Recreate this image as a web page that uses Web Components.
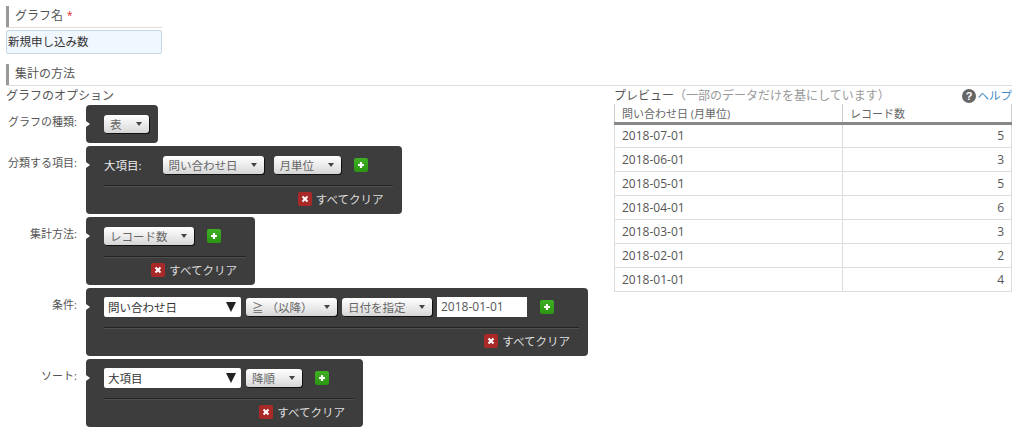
<!DOCTYPE html>
<html lang="ja">
<head>
<meta charset="utf-8">
<style>
html, body { margin: 0; background: #fff; }
body { font: 12px "Open Sans", "Noto Sans CJK JP", sans-serif; color: #444; width: 1024px; height: 436px; overflow: hidden; }
</style>
</head>
<body>
<report-form></report-form>

<script>
class SectionTitle extends HTMLElement {
  constructor() {
    super();
    this.attachShadow({ mode: 'open' }).innerHTML = `
<style>
:host { display: block; border-bottom: 1px solid #ddd; height: 21px; }
div { border-left: 3px solid #999; height: 21px; padding-left: 6px; line-height: var(--title-line, 19px); font-size: 12px; color: #555; box-sizing: border-box; }
::slotted(b) { color: #d22; font-weight: normal; font-size: 10px; margin-left: 4px; vertical-align: 1px; }
</style>
<div><slot></slot></div>`;
  }
}

class DropButton extends HTMLElement {
  constructor() {
    super();
    this.attachShadow({ mode: 'open' }).innerHTML = `
<style>
:host { display: inline-flex; align-items: center; justify-content: space-between; box-sizing: border-box; height: 18px; padding: 0 7px 0 6px; font-size: 11.5px; color: #666; white-space: nowrap;
  background: linear-gradient(#fff, #e4e4e4 70%, #d4d4d4); border-radius: 3px; box-shadow: 1px 1px 0 #111; }
i { width: 0; height: 0; border: 3.5px solid transparent; border-top: 4px solid #444; border-bottom: 0; margin-left: 8px; }
</style>
<slot></slot><i></i>`;
  }
}

class SelectBox extends HTMLElement {
  constructor() {
    super();
    this.attachShadow({ mode: 'open' }).innerHTML = `
<style>
:host { display: inline-flex; align-items: center; justify-content: space-between; box-sizing: border-box; width: 137px; height: 20px; padding: 0 5px 0 4px; background: #fff; border-radius: 2px; font-size: 11.5px; color: #333; }
i { width: 0; height: 0; border: 5px solid transparent; border-top: 10px solid #222; border-bottom: 0; }
</style>
<slot></slot><i></i>`;
  }
}

class AddButton extends HTMLElement {
  constructor() {
    super();
    this.attachShadow({ mode: 'open' }).innerHTML = `
<style>
:host { display: inline-flex; width: 14px; height: 14px; background: linear-gradient(#3fb024, #2c9412); border-radius: 2px; align-items: center; justify-content: center; }
</style>
<svg width="8" height="8" viewBox="0 0 8 8"><path d="M4 1v6M1 4h6" stroke="#fff" stroke-width="2.2" fill="none"/></svg>`;
  }
}

class ClearButton extends HTMLElement {
  constructor() {
    super();
    this.attachShadow({ mode: 'open' }).innerHTML = `
<style>
:host { display: flex; align-items: center; justify-content: flex-end; height: 14px; font-size: 11.5px; color: #ddd; }
span { display: inline-flex; width: 14px; height: 14px; margin-right: 4px; background: #a92828; border-radius: 2px; align-items: center; justify-content: center; }
</style>
<span><svg width="8" height="8" viewBox="0 0 8 8"><path d="M1.5 1.5l5 5M6.5 1.5l-5 5" stroke="#fff" stroke-width="2" fill="none"/></svg></span>すべてクリア`;
  }
}

class OptionRow extends HTMLElement {
  constructor() {
    super();
    this.attachShadow({ mode: 'open' }).innerHTML = `
<style>
:host { display: flex; align-items: flex-start; margin-bottom: 3px; }
.label { width: 71px; margin-right: 9px; text-align: right; font-size: 11px; color: #555; padding-top: 10px; line-height: 14px; white-space: nowrap; }
.panel { position: relative; box-sizing: border-box; background: #3d3d3d; border-radius: 4px; padding: 9px 9px 8px 18px; color: #eee; }
.panel::before { content: ""; position: absolute; left: 0; top: 16px; border: 3.5px solid transparent; border-left: 4px solid #fff; border-right: 0; }
.main { display: flex; align-items: center; gap: 5px; height: 20px; }
.foot { margin-top: 10px; border-top: 1px solid #222; box-shadow: inset 0 1px 0 #505050; padding: 6px 9px 0 0; }
:host([plain]) .foot { display: none; }
:host([plain]) .panel { padding-bottom: 9px; }
</style>
<div class="label"><slot name="label"></slot></div>
<div class="panel">
  <div class="main"><slot></slot></div>
  <div class="foot"><slot name="foot"></slot></div>
</div>`;
  }
}

class PreviewTable extends HTMLElement {
  constructor() {
    super();
    const rows = [['2018-07-01', 5], ['2018-06-01', 3], ['2018-05-01', 5], ['2018-04-01', 6], ['2018-03-01', 3], ['2018-02-01', 2], ['2018-01-01', 4]];
    this.attachShadow({ mode: 'open' }).innerHTML = `
<style>
:host { display: block; font-size: 12px; color: #555; }
.top { display: flex; justify-content: space-between; height: 17px; line-height: 18px; }
.top em { font-style: normal; color: #999; }
.help { color: #3f8ac6; display: flex; align-items: center; font-size: 11.5px; }
.help svg { margin-right: 2px; }
table { border-collapse: collapse; width: 398px; table-layout: fixed; }
th { font-weight: normal; text-align: left; height: 19px; padding: 0 7px; border-bottom: 3px solid #888; border-left: 1px solid #ccc; box-sizing: border-box; color: #666; font-size: 11px; }
td { height: 24px; padding: 0 7px; border: 1px solid #ddd; border-top: 0; box-sizing: border-box; }
td + td { text-align: right; }
th + th { border-right: 1px solid #ccc; }
th:first-child { width: 228px; }
</style>
<div class="top">
  <span>プレビュー<em>（一部のデータだけを基にしています）</em></span>
  <span class="help"><svg width="14" height="14" viewBox="0 0 14 14"><circle cx="7" cy="7" r="7" fill="#666"/><text x="7" y="11" text-anchor="middle" font-size="11" font-weight="bold" fill="#fff" font-family="Liberation Sans">?</text></svg>ヘルプ</span>
</div>
<table>
  <tr><th>問い合わせ日 (月単位)</th><th>レコード数</th></tr>
  ${rows.map(r => `<tr><td>${r[0]}</td><td>${r[1]}</td></tr>`).join('')}
</table>`;
  }
}

class ReportForm extends HTMLElement {
  constructor() {
    super();
    this.attachShadow({ mode: 'open' }).innerHTML = `
<style>
:host { display: block; padding: 6px 12px 0 6px; }
.name { width: 156px; }
.input { box-sizing: border-box; width: 156px; height: 24px; margin: 2px 0 10px; padding-left: 1px; line-height: 22px; background: #f0f7fe; border: 1px solid #c4d6e4; border-radius: 2px; color: #333; font-size: 11.5px; }
.method { --title-line: 20px; }
.cols { display: flex; }
.left { width: 608px; }
.opt-title { height: 19px; line-height: 20px; box-sizing: border-box; font-size: 12px; color: #555; }
.right { width: 398px; padding-top: 1px; }
.big { color: #eee; font-size: 11.5px; margin-right: 16px; }
.date { box-sizing: border-box; width: 90px; height: 20px; background: #fff; padding-left: 4px; line-height: 20px; font-size: 12px; color: #555; }
add-button { margin: 0 25px 0 8px; }
</style>
<div class="name">
  <section-title>グラフ名<b>*</b></section-title>
  <div class="input">新規申し込み数</div>
</div>
<section-title class="method">集計の方法</section-title>
<div class="cols">
  <div class="left">
    <div class="opt-title">グラフのオプション</div>
    <option-row plain>
      <span slot="label">グラフの種類:</span>
      <drop-button style="width:45px">表</drop-button>
    </option-row>
    <option-row>
      <span slot="label">分類する項目:</span>
      <span class="big">大項目:</span>
      <drop-button style="width:101px">問い合わせ日</drop-button>
      <drop-button style="width:67px;margin-left:5px">月単位</drop-button>
      <add-button></add-button>
      <clear-button slot="foot"></clear-button>
    </option-row>
    <option-row>
      <span slot="label">集計方法:</span>
      <drop-button style="width:90px">レコード数</drop-button>
      <add-button></add-button>
      <clear-button slot="foot"></clear-button>
    </option-row>
    <option-row>
      <span slot="label">条件:</span>
      <select-box>問い合わせ日</select-box>
      <drop-button style="width:91px">≧ （以降）</drop-button>
      <drop-button style="width:90px">日付を指定</drop-button>
      <span class="date">2018-01-01</span>
      <add-button></add-button>
      <clear-button slot="foot"></clear-button>
    </option-row>
    <option-row>
      <span slot="label">ソート:</span>
      <select-box>大項目</select-box>
      <drop-button style="width:56px">降順</drop-button>
      <add-button></add-button>
      <clear-button slot="foot"></clear-button>
    </option-row>
  </div>
  <div class="right"><preview-table></preview-table></div>
</div>`;
  }
}

customElements.define('section-title', SectionTitle);
customElements.define('drop-button', DropButton);
customElements.define('select-box', SelectBox);
customElements.define('add-button', AddButton);
customElements.define('clear-button', ClearButton);
customElements.define('option-row', OptionRow);
customElements.define('preview-table', PreviewTable);
customElements.define('report-form', ReportForm);
</script>
</body>
</html>
